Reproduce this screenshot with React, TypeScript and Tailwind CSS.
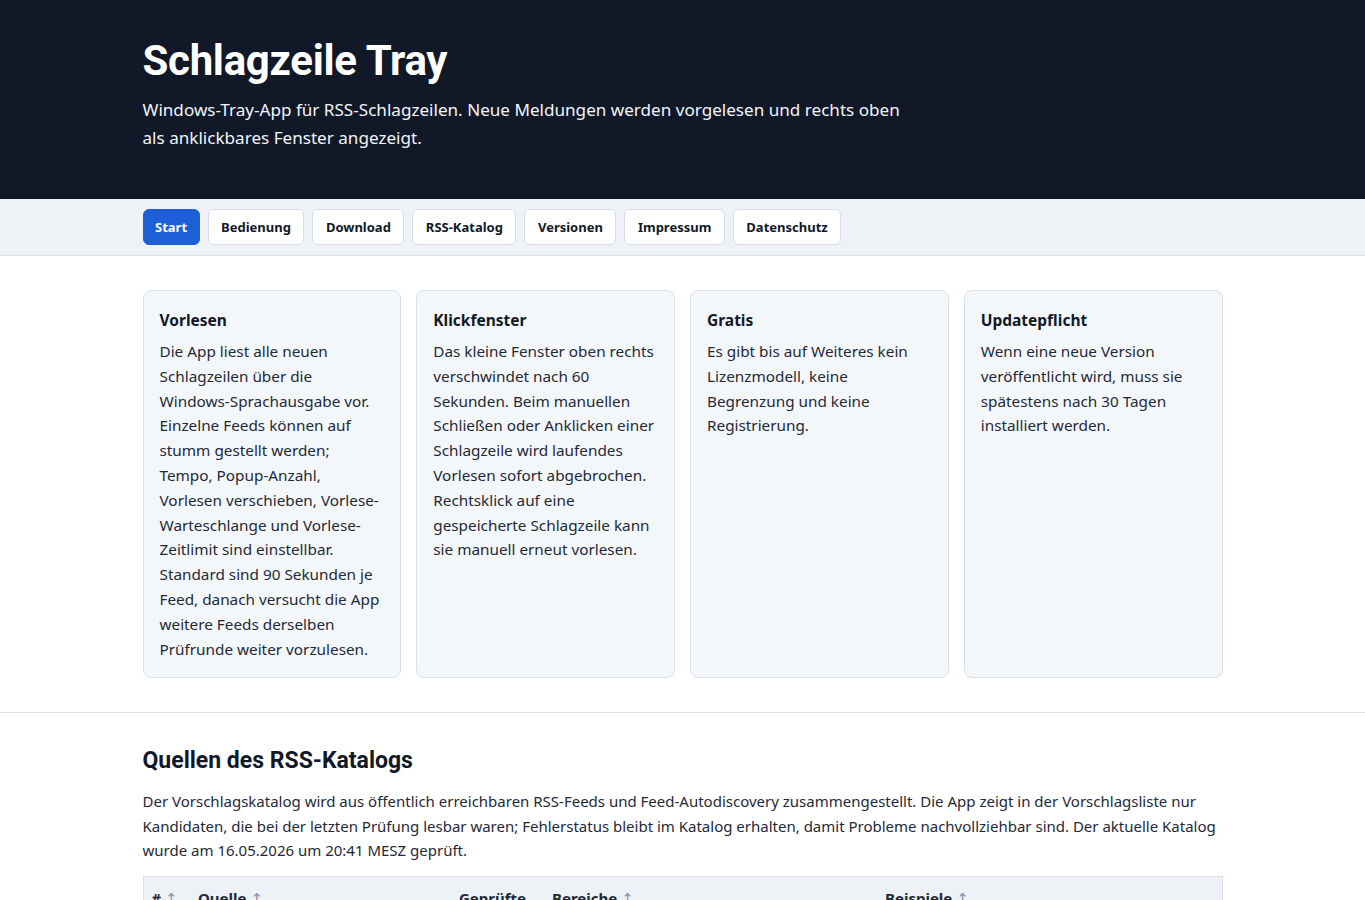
import React from 'react';

const nav = ['Start', 'Bedienung', 'Download', 'RSS-Katalog', 'Versionen', 'Impressum', 'Datenschutz'];

const cards = [
  {
    title: 'Vorlesen',
    text: 'Die App liest alle neuen Schlagzeilen über die Windows-Sprachausgabe vor. Einzelne Feeds können auf stumm gestellt werden; Tempo, Popup-Anzahl, Vorlesen verschieben, Vorlese-Warteschlange und Vorlese-Zeitlimit sind einstellbar. Standard sind 90 Sekunden je Feed, danach versucht die App weitere Feeds derselben Prüfrunde weiter vorzulesen.',
  },
  {
    title: 'Klickfenster',
    text: 'Das kleine Fenster oben rechts verschwindet nach 60 Sekunden. Beim manuellen Schließen oder Anklicken einer Schlagzeile wird laufendes Vorlesen sofort abgebrochen. Rechtsklick auf eine gespeicherte Schlagzeile kann sie manuell erneut vorlesen.',
  },
  {
    title: 'Gratis',
    text: 'Es gibt bis auf Weiteres kein Lizenzmodell, keine Begrenzung und keine Registrierung.',
  },
  {
    title: 'Updatepflicht',
    text: 'Wenn eine neue Version veröffentlicht wird, muss sie spätestens nach 30 Tagen installiert werden.',
  },
];

const rows = [
  ['1', 'tagesschau.de', '4', 'Inland, Ausland, Wirtschaft', 'Top-Meldungen, Eilmeldungen'],
  ['2', 'Deutsche Welle', '3', 'Welt, Europa', 'Nachrichten, Themen'],
];

const Arrow = () => (
  <span className="font-['DejaVu_Sans',sans-serif] font-normal text-[15px] text-[#8a8fb0]">↑</span>
);

const App = () => {
  return (
    <div className="min-h-screen bg-white text-[#1f2937] font-['Noto_Sans','Open_Sans',sans-serif]">
      {/* Header */}
      <header className="bg-[#111827] text-white">
        <div className="max-w-[1080px] mx-auto pt-[36px] pb-[47px]">
          <h1 className="font-['Roboto',sans-serif] font-bold text-[42px] leading-[50px] tracking-[-0.3px]">
            Schlagzeile Tray
          </h1>
          <p className="mt-[10px] max-w-[770px] text-[17.1px] leading-[28px] text-[#f1f5f9]">
            Windows-Tray-App für RSS-Schlagzeilen. Neue Meldungen werden vorgelesen und rechts oben als anklickbares Fenster angezeigt.
          </p>
        </div>
      </header>

      {/* Navigation */}
      <nav className="bg-[#eef2f7] border-b border-[#d9e0ea]">
        <div className="max-w-[1080px] mx-auto py-[10px] flex gap-[8px]">
          {nav.map((n, i) => (
            <a
              key={n}
              className={
                i === 0
                  ? 'h-[36px] px-[11.5px] pt-[2px] flex items-center rounded-[6px] bg-[#1d5fd6] border border-[#1d5fd6] text-white text-[13px] font-bold'
                  : 'h-[36px] px-[12.5px] pt-[2px] flex items-center rounded-[6px] bg-white border border-[#d7dee8] text-[#111827] text-[13px] font-bold'
              }
            >
              {n}
            </a>
          ))}
        </div>
      </nav>

      {/* Feature cards */}
      <section className="border-b border-[#d9e0ea]">
        <div className="max-w-[1080px] mx-auto pt-[34px] pb-[34px] grid grid-cols-4 gap-[15px]">
          {cards.map((c) => (
            <div key={c.title} className="bg-[#f4f7fa] border border-[#d9e0ea] rounded-[8px] px-[16px] pt-[17px] pb-[16px]">
              <h3 className="text-[15.5px] leading-[24px] font-bold text-[#111827]">{c.title}</h3>
              <p className="mt-[7px] text-[15.3px] leading-[24.8px]">{c.text}</p>
            </div>
          ))}
        </div>
      </section>

      {/* Catalog sources */}
      <section>
        <div className="max-w-[1080px] mx-auto pt-[33px] pb-[40px]">
          <h2 className="font-['Roboto',sans-serif] font-bold text-[23px] leading-[30px] text-[#111827]">
            Quellen des RSS-Katalogs
          </h2>
          <p className="mt-[13px] text-[15px] leading-[24.5px]">
            Der Vorschlagskatalog wird aus öffentlich erreichbaren RSS-Feeds und Feed-Autodiscovery zusammengestellt. Die App zeigt in der Vorschlagsliste nur Kandidaten, die bei der letzten Prüfung lesbar waren; Fehlerstatus bleibt im Katalog erhalten, damit Probleme nachvollziehbar sind. Der aktuelle Katalog wurde am 16.05.2026 um 20:41 MESZ geprüft.
          </p>
          <table className="mt-[13px] w-full border border-[#d9e0ea] text-[15px] text-left border-collapse">
            <thead className="bg-[#eef2f6]">
              <tr className="align-top">
                <th className="w-[47px] px-[8px] pt-[10px] pb-[10px] font-bold">
                  # <Arrow />
                </th>
                <th className="w-[261px] px-[8px] pt-[10px] pb-[10px] font-bold">
                  Quelle <Arrow />
                </th>
                <th className="w-[93px] px-[8px] pt-[10px] pb-[10px] font-bold">
                  Geprüfte Feeds <Arrow />
                </th>
                <th className="w-[333px] px-[8px] pt-[10px] pb-[10px] font-bold">
                  Bereiche <Arrow />
                </th>
                <th className="px-[8px] pt-[10px] pb-[10px] font-bold">
                  Beispiele <Arrow />
                </th>
              </tr>
            </thead>
            <tbody>
              {rows.map((r) => (
                <tr key={r[0]} className="border-t border-[#d9e0ea]">
                  {r.map((cell, j) => (
                    <td key={j} className="px-[8px] py-[10px]">{cell}</td>
                  ))}
                </tr>
              ))}
            </tbody>
          </table>
        </div>
      </section>
    </div>
  );
};

export default App;
